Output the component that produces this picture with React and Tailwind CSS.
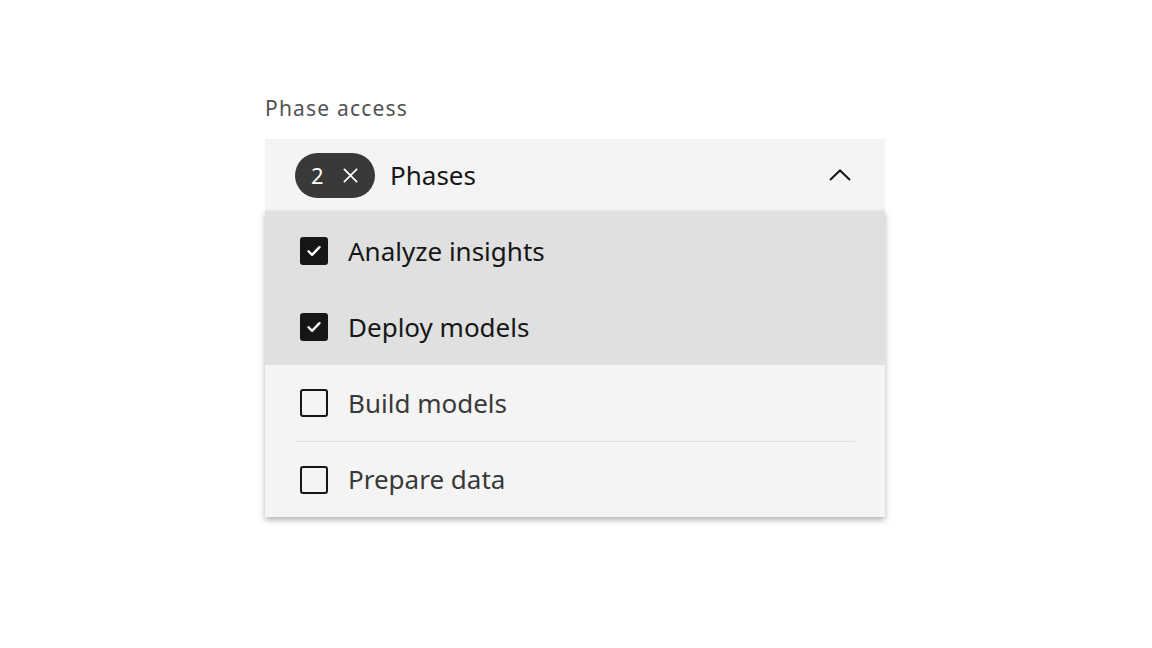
import React from "react";

const items = [
  { label: "Analyze insights", checked: true },
  { label: "Deploy models", checked: true },
  { label: "Build models", checked: false },
  { label: "Prepare data", checked: false },
];

const Checkbox = ({ checked }) =>
  checked ? (
    <div className="w-[28px] h-[28px] rounded-[3px] bg-[#161616] flex items-center justify-center">
      <svg width="22" height="22" viewBox="0 0 16 16" fill="none">
        <path d="M4 8.2l2.6 2.6 5.4-5.6" stroke="#fff" strokeWidth="1.7" strokeLinecap="round" strokeLinejoin="round" />
      </svg>
    </div>
  ) : (
    <div className="w-[28px] h-[28px] rounded-[3px] border-2 border-[#161616]" />
  );

const App = () => {
  return (
    <div className="w-[1152px] h-[648px] bg-white font-['Noto_Sans',sans-serif] pt-[92px] pl-[265px]">
      <div className="text-[21px] text-[#525252] tracking-[1.2px] leading-[32px] mb-[15px]">Phase access</div>
      <div className="w-[620px]">
        <div className="h-[72px] bg-[#f4f4f4] flex items-center pl-[30px] pr-[34px]">
          <div className="h-[45px] w-[80px] rounded-full bg-[#393939] text-white flex items-center pl-[16px] gap-[18px]">
            <span className="text-[22px] leading-none">2</span>
            <svg width="17" height="17" viewBox="0 0 18 18">
              <path d="M2 2l14 14M16 2L2 16" stroke="#fff" strokeWidth="1.8" />
            </svg>
          </div>
          <span className="ml-[15px] text-[26px] text-[#161616]">Phases</span>
          <svg className="ml-auto" width="22" height="12" viewBox="0 0 22 12">
            <path d="M1 11L11 1.5 21 11" stroke="#161616" strokeWidth="2" fill="none" />
          </svg>
        </div>
        <div className="shadow-[0_3px_6px_rgba(0,0,0,0.3)]">
          {items.map((it, i) => (
            <div
              key={i}
              className={
                it.checked
                  ? i === 0
                    ? "bg-[#e0e0e0] px-[30px] pt-[2px]"
                    : "bg-[#e0e0e0] px-[30px]"
                  : "bg-[#f4f4f4] px-[30px]"
              }
            >
              <div
                className={
                  i === 3
                    ? "h-[76px] flex items-center border-t border-[#e0e0e0]"
                    : "h-[76px] flex items-center"
                }
              >
                <div className="ml-[5px]">
                  <Checkbox checked={it.checked} />
                </div>
                <span
                  className={
                    it.checked
                      ? "ml-[20px] text-[26px] text-[#161616]"
                      : "ml-[20px] text-[26px] text-[#393939]"
                  }
                >
                  {it.label}
                </span>
              </div>
            </div>
          ))}
        </div>
      </div>
    </div>
  );
};

export default App;
